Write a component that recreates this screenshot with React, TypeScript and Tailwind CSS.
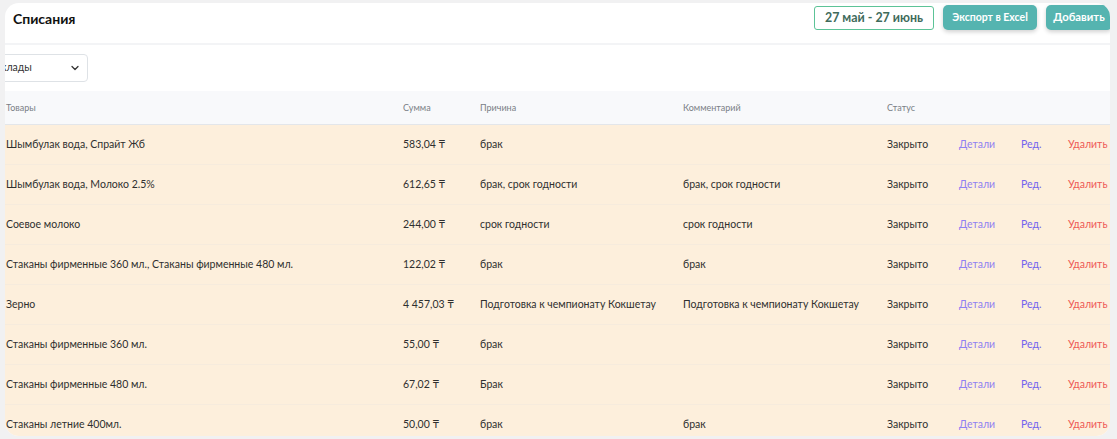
import { ChevronDown } from "lucide-react";

type Row = {
  goods: string;
  sum: string;
  reason: string;
  comment: string;
  status: string;
};

const rows: Row[] = [
  { goods: "Шымбулак вода, Спрайт Жб", sum: "583,04 ₸", reason: "брак", comment: "", status: "Закрыто" },
  { goods: "Шымбулак вода, Молоко 2.5%", sum: "612,65 ₸", reason: "брак, срок годности", comment: "брак, срок годности", status: "Закрыто" },
  { goods: "Соевое молоко", sum: "244,00 ₸", reason: "срок годности", comment: "срок годности", status: "Закрыто" },
  { goods: "Стаканы фирменные 360 мл., Стаканы фирменные 480 мл.", sum: "122,02 ₸", reason: "брак", comment: "брак", status: "Закрыто" },
  { goods: "Зерно", sum: "4 457,03 ₸", reason: "Подготовка к чемпионату Кокшетау", comment: "Подготовка к чемпионату Кокшетау", status: "Закрыто" },
  { goods: "Стаканы фирменные 360 мл.", sum: "55,00 ₸", reason: "брак", comment: "", status: "Закрыто" },
  { goods: "Стаканы фирменные 480 мл.", sum: "67,02 ₸", reason: "Брак", comment: "", status: "Закрыто" },
  { goods: "Стаканы летние 400мл.", sum: "50,00 ₸", reason: "брак", comment: "брак", status: "Закрыто" },
];

const cols = "grid grid-cols-[397px_77px_203px_204px_72px_62px_47px_1fr] items-center pl-[1px]";

export default function App() {
  return (
    <div
      className="h-[439px] w-[1117px] overflow-hidden bg-[#f1f1f2] pb-[3px] pl-[5px] pr-[7px] pt-[3px]"
      style={{ fontFamily: 'Lato, "Noto Sans", sans-serif' }}
    >
      <div className="flex h-full flex-col overflow-hidden rounded-[14px] bg-white">
        {/* header */}
        <div className="flex h-[42px] shrink-0 items-start justify-between border-b-2 border-[#f3f4f6] pl-[8px]">
          <h1 className="pt-[5px] text-[14px] font-bold text-[#111]">Списания</h1>
          <div className="mr-[-2px] flex items-start gap-[9px] pt-[2px]">
            <button
              type="button"
              className="mt-[1px] h-[24px] w-[120px] rounded-[3px] border-[1.5px] border-[#5cc397] text-[12.4px] font-bold text-[#3f6b5b]"
            >
              27 май - 27 июнь
            </button>
            <button
              type="button"
              className="h-[25px] w-[94px] rounded-[5px] bg-[#55b4b0] text-[10.5px] font-bold text-white shadow-[0_2px_4px_rgba(0,0,0,0.18)]"
            >
              Экспорт в Excel
            </button>
            <button
              type="button"
              className="h-[25px] w-[66px] rounded-[5px] bg-[#55b4b0] text-[11.3px] font-bold text-white shadow-[0_2px_4px_rgba(0,0,0,0.18)]"
            >
              Добавить
            </button>
          </div>
        </div>

        {/* filters */}
        <div className="flex h-[46px] shrink-0 items-center">
          <div className="ml-[-26px] flex h-[28px] w-[109px] items-center justify-between rounded-[4px] border border-[#dee2e6] pl-[14px] pr-[6px] text-[10.5px] text-[#333]">
            <span>Склады</span>
            <ChevronDown className="h-[12px] w-[12px] text-[#333]" strokeWidth={2.5} />
          </div>
        </div>

        {/* table head */}
        <div className={`${cols} h-[34px] shrink-0 border-b border-[#e3e6ea] bg-[#f8f9fb] text-[9px] text-[#7a7f86]`}>
          <div>Товары</div>
          <div>Сумма</div>
          <div>Причина</div>
          <div>Комментарий</div>
          <div>Статус</div>
          <div />
          <div />
          <div />
        </div>

        {/* rows */}
        {rows.map((r, i) => (
          <div
            key={i}
            className={`${cols} h-[40px] shrink-0 border-b border-[#f6ebdd] bg-[#fdefdc] text-[10.5px] text-[#2f2f2f]`}
          >
            <div className="whitespace-nowrap">{r.goods}</div>
            <div className="whitespace-nowrap">{r.sum}</div>
            <div className="whitespace-nowrap">{r.reason}</div>
            <div className="whitespace-nowrap">{r.comment}</div>
            <div>{r.status}</div>
            <div className="text-[#8f80f2]">Детали</div>
            <div className="text-[#7263ee]">Ред.</div>
            <div className="whitespace-nowrap text-[#ee5a56]">Удалить</div>
          </div>
        ))}
      </div>
    </div>
  );
}
